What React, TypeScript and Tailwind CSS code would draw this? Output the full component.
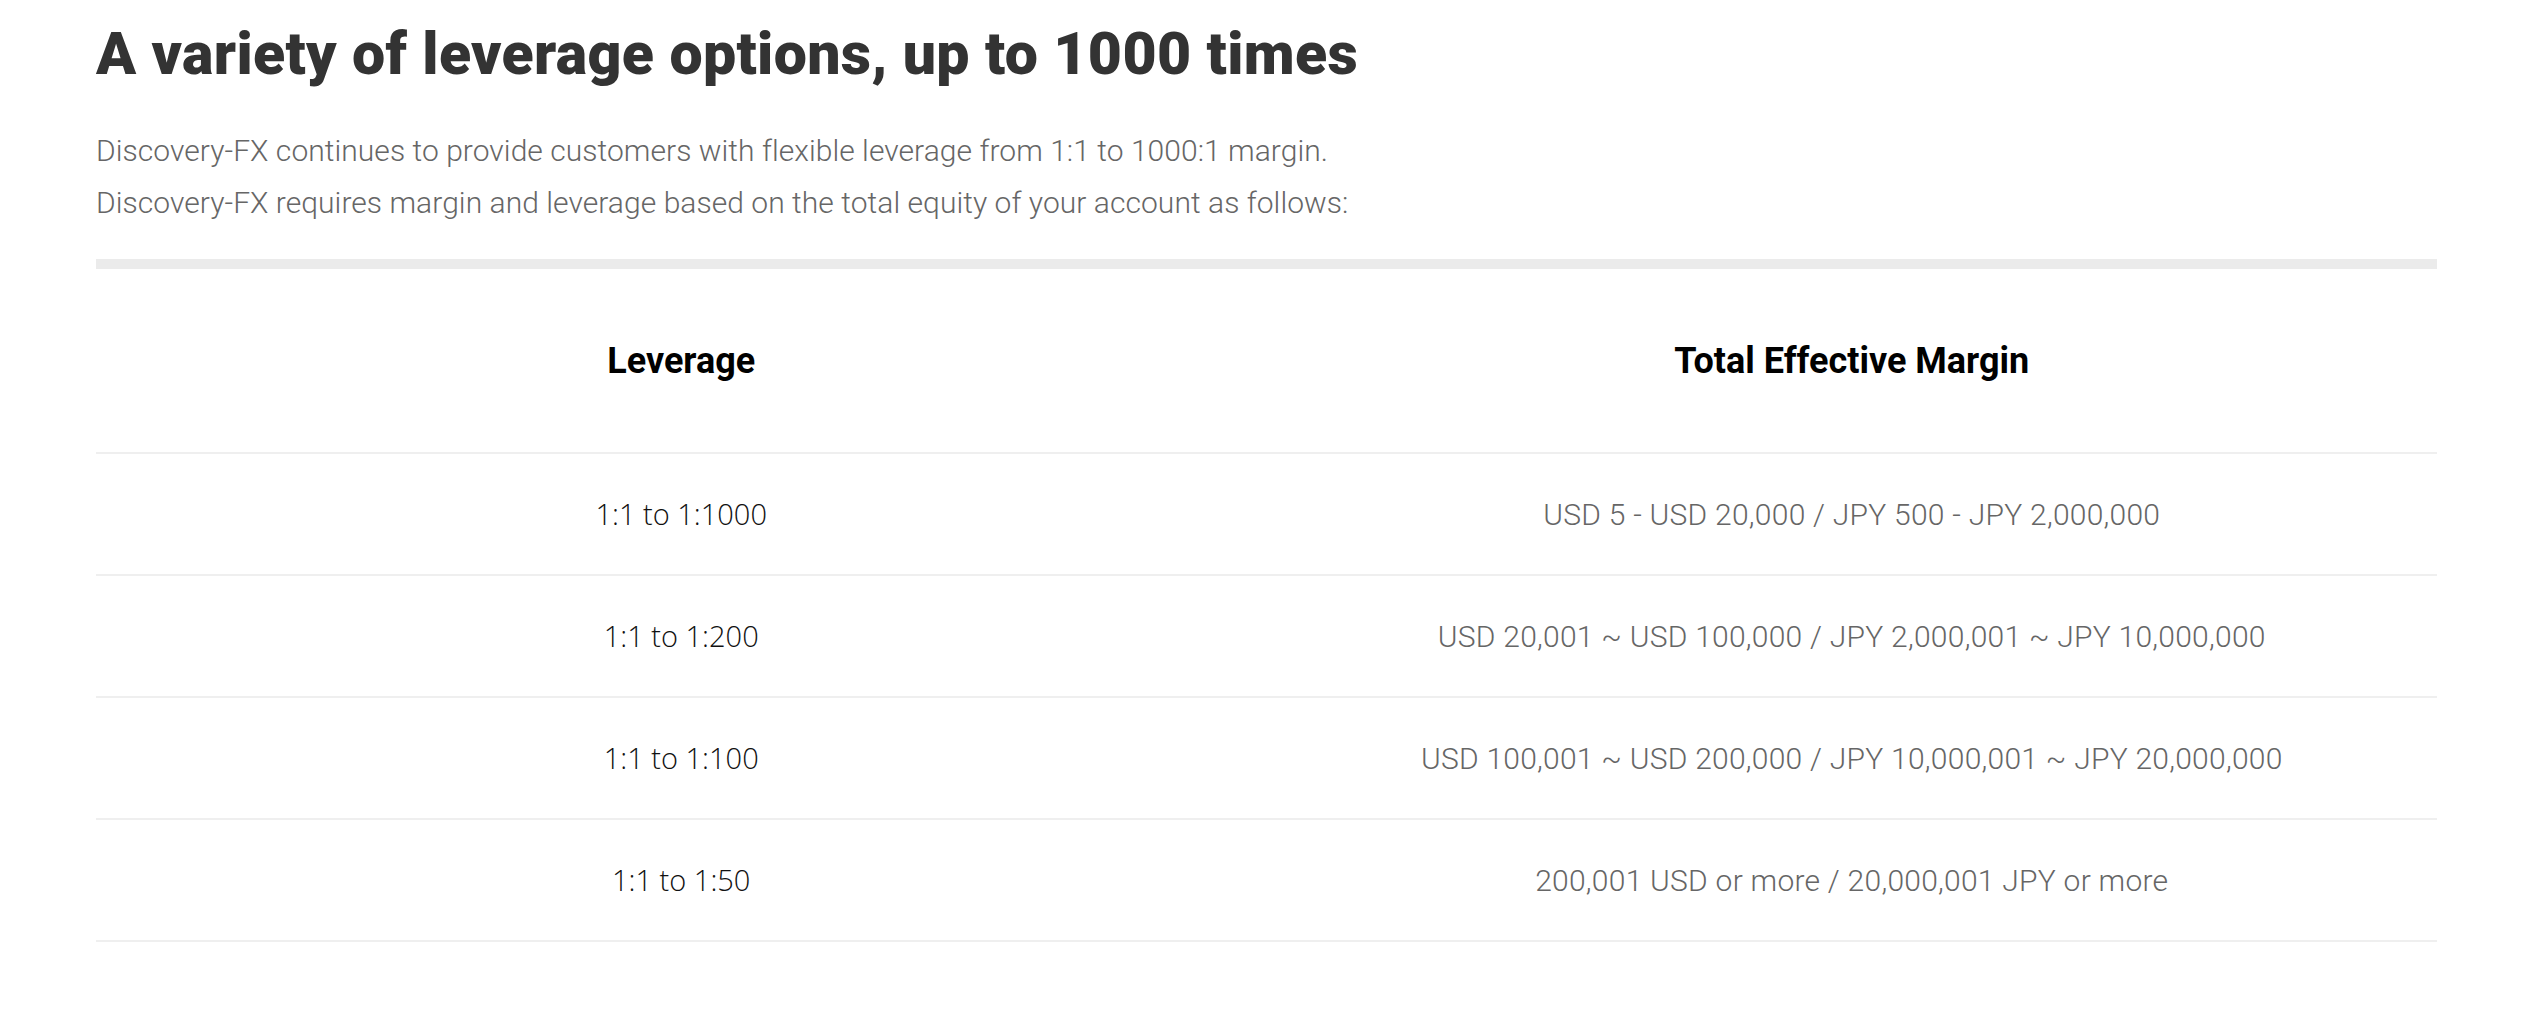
const rows = [
  { leverage: "1:1 to 1:1000", margin: "USD 5 - USD 20,000 / JPY 500 - JPY 2,000,000" },
  { leverage: "1:1 to 1:200", margin: "USD 20,001 ~ USD 100,000 / JPY 2,000,001 ~ JPY 10,000,000" },
  { leverage: "1:1 to 1:100", margin: "USD 100,001 ~ USD 200,000 / JPY 10,000,001 ~ JPY 20,000,000" },
  { leverage: "1:1 to 1:50", margin: "200,001 USD or more / 20,000,001 JPY or more" },
];

const App: React.FC = () => {
  return (
    <section className="min-h-screen bg-white pl-[96px] pr-[107px] pt-[24px] font-['Roboto',sans-serif]">
      <h2 className="text-[59px] leading-none font-black text-[#333] tracking-[0.35px]">
        A variety of leverage options, up to 1000 times
      </h2>

      <div className="mt-[42px] text-[30px] leading-[52px] font-light text-[#666] tracking-[0.05px]">
        <p>Discovery-FX continues to provide customers with flexible leverage from 1:1 to 1000:1 margin.</p>
        <p>Discovery-FX requires margin and leverage based on the total equity of your account as follows:</p>
      </div>

      <div className="mt-[30px] border-t-[10px] border-[#ebebeb]">
        <div className="grid grid-cols-2 h-[185px] items-center border-b-2 border-[#efefef]">
          <div className="text-center text-[36px] font-bold text-black">Leverage</div>
          <div className="text-center text-[36px] font-bold text-black">
            Total Effective Margin
          </div>
        </div>
        {rows.map((r) => (
          <div
            key={r.leverage}
            className="grid grid-cols-2 h-[122px] items-center border-b-2 border-[#efefef]"
          >
            <div className="text-center text-[29px] font-light text-[#111] font-['Open_Sans',sans-serif]">
              {r.leverage}
            </div>
            <div className="text-center text-[30px] font-light text-[#666] tracking-[0.25px]">
              {r.margin}
            </div>
          </div>
        ))}
      </div>
    </section>
  );
};

export default App;
